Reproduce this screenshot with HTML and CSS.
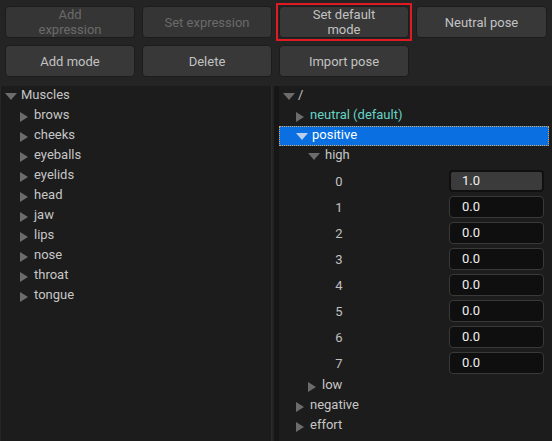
FILE: index.html
```html
<!DOCTYPE html>
<html>
<head>
<meta charset="utf-8">
<link rel="stylesheet" href="styles.css">
</head>
<body>
<div class="toolbar">
  <div class="btn disabled">Add<br>expression</div>
  <div class="btn disabled">Set expression</div>
  <div class="btn focused">Set default<br>mode</div>
  <div class="btn">Neutral pose</div>
  <div class="btn">Add mode</div>
  <div class="btn">Delete</div>
  <div class="btn">Import pose</div>
</div>
<div class="panels">
  <div class="panel left">
    <div class="row lvl0"><span class="tri down"></span><span class="label">Muscles</span></div>
    <div class="row lvl1"><span class="tri right"></span><span class="label">brows</span></div>
    <div class="row lvl1"><span class="tri right"></span><span class="label">cheeks</span></div>
    <div class="row lvl1"><span class="tri right"></span><span class="label">eyeballs</span></div>
    <div class="row lvl1"><span class="tri right"></span><span class="label">eyelids</span></div>
    <div class="row lvl1"><span class="tri right"></span><span class="label">head</span></div>
    <div class="row lvl1"><span class="tri right"></span><span class="label">jaw</span></div>
    <div class="row lvl1"><span class="tri right"></span><span class="label">lips</span></div>
    <div class="row lvl1"><span class="tri right"></span><span class="label">nose</span></div>
    <div class="row lvl1"><span class="tri right"></span><span class="label">throat</span></div>
    <div class="row lvl1"><span class="tri right"></span><span class="label">tongue</span></div>
  </div>
  <div class="splitter"></div>
  <div class="panel right-panel">
    <div class="row r0"><span class="tri down"></span><span class="label">/</span></div>
    <div class="row r1"><span class="tri right"></span><span class="label teal">neutral (default)</span></div>
    <div class="row r1 selected"><span class="tri down light"></span><span class="label white">positive</span></div>
    <div class="row r2"><span class="tri down"></span><span class="label">high</span></div>
    <div class="values">
      <div class="vrow"><span class="num">0</span><span class="field active">1.0</span></div>
      <div class="vrow"><span class="num">1</span><span class="field">0.0</span></div>
      <div class="vrow"><span class="num">2</span><span class="field">0.0</span></div>
      <div class="vrow"><span class="num">3</span><span class="field">0.0</span></div>
      <div class="vrow"><span class="num">4</span><span class="field">0.0</span></div>
      <div class="vrow"><span class="num">5</span><span class="field">0.0</span></div>
      <div class="vrow"><span class="num">6</span><span class="field">0.0</span></div>
      <div class="vrow"><span class="num">7</span><span class="field">0.0</span></div>
    </div>
    <div class="row r2"><span class="tri right"></span><span class="label">low</span></div>
    <div class="row r1"><span class="tri right"></span><span class="label">negative</span></div>
    <div class="row r1"><span class="tri right"></span><span class="label">effort</span></div>
  </div>
</div>
</body>
</html>
```
FILE: styles.css
```css
html, body {
  margin: 0;
  padding: 0;
  height: 100%;
  overflow: hidden;
}
body {
  background: #242424;
  font-family: Roboto, "Noto Sans", sans-serif;
  font-size: 13px;
  color: #c6c6c6;
}
.toolbar {
  display: grid;
  grid-template-columns: 130px 130px 130px 131px;
  grid-auto-rows: 32px;
  column-gap: 7px;
  row-gap: 7px;
  padding: 6px 0 0 5px;
  height: 80px;
  box-sizing: border-box;
}
.btn {
  position: relative;
  box-sizing: border-box;
  background: #383838;
  border: 1px solid #1c1c1c;
  border-radius: 4px;
  display: flex;
  align-items: center;
  justify-content: center;
  text-align: center;
  line-height: 15px;
  color: #c2c2c2;
}
.btn.disabled {
  color: #6a6a6a;
  background: #353535;
}
.btn.focused::after {
  content: "";
  position: absolute;
  top: -4px;
  left: -4px;
  right: -4px;
  bottom: -4px;
  border: 2px solid #e01a22;
}
.panels {
  display: flex;
  height: 355px;
  margin-top: 6px;
}
.panel {
  background: #1c1c1c;
  height: 100%;
}
.left {
  width: 272px;
  border-left: 1px solid #262626;
  box-sizing: border-box;
  border-right: 1px solid #2a2a2a;
}
.splitter {
  width: 7px;
  background: #161616;
  border-left: 2px solid #242424;
  box-sizing: border-box;
}
.right-panel {
  flex: 1;
  padding-right: 3px;
}
.row {
  height: 20px;
  display: flex;
  align-items: center;
  white-space: nowrap;
}
.label {
  line-height: 20px;
  position: relative;
  top: -1px;
}
.tri {
  display: inline-block;
  width: 0;
  height: 0;
  flex: none;
}
.tri.down {
  border-left: 6px solid transparent;
  border-right: 6px solid transparent;
  border-top: 7px solid #6c6c6c;
  margin-right: 3px;
}
.tri.right {
  border-top: 5.5px solid transparent;
  border-bottom: 5.5px solid transparent;
  border-left: 8px solid #6c6c6c;
  margin-right: 6px;
  position: relative;
  top: 1px;
}
.lvl0 { padding-left: 4px; }
.lvl0 .tri.down { margin-right: 4px; }
.lvl1 { padding-left: 19px; }
.r0 { padding-left: 4px; }
.r1 { padding-left: 17px; }
.r1 .tri.down { margin-right: 4px; }
.r2 { padding-left: 29px; }
.r2 .tri.down { margin-right: 5px; }
.r2 .tri.right { margin-right: 6px; }
.teal { color: #66d3c5; }
.white { color: #ffffff; }
.selected {
  background: #0a6fe0;
  outline: 1px dotted #e8a24a;
  outline-offset: -1px;
}
.selected .tri.down { border-top-color: #b8cff0; }
.values {
  padding-top: 2px;
}
.vrow {
  height: 26px;
  display: flex;
  align-items: center;
}
.num {
  width: 20px;
  margin-left: 50px;
  text-align: center;
  color: #c0c0c0;
}
.field {
  margin-left: 100px;
  box-sizing: border-box;
  width: 95px;
  height: 22px;
  background: #0f0f0f;
  border: 1px solid #393939;
  border-radius: 4px;
  color: #f0f0f0;
  padding-left: 12px;
  line-height: 20px;
}
.field.active {
  background: #3b3b3b;
  border: 2px solid #101010;
  padding-left: 11px;
  line-height: 18px;
}
```
